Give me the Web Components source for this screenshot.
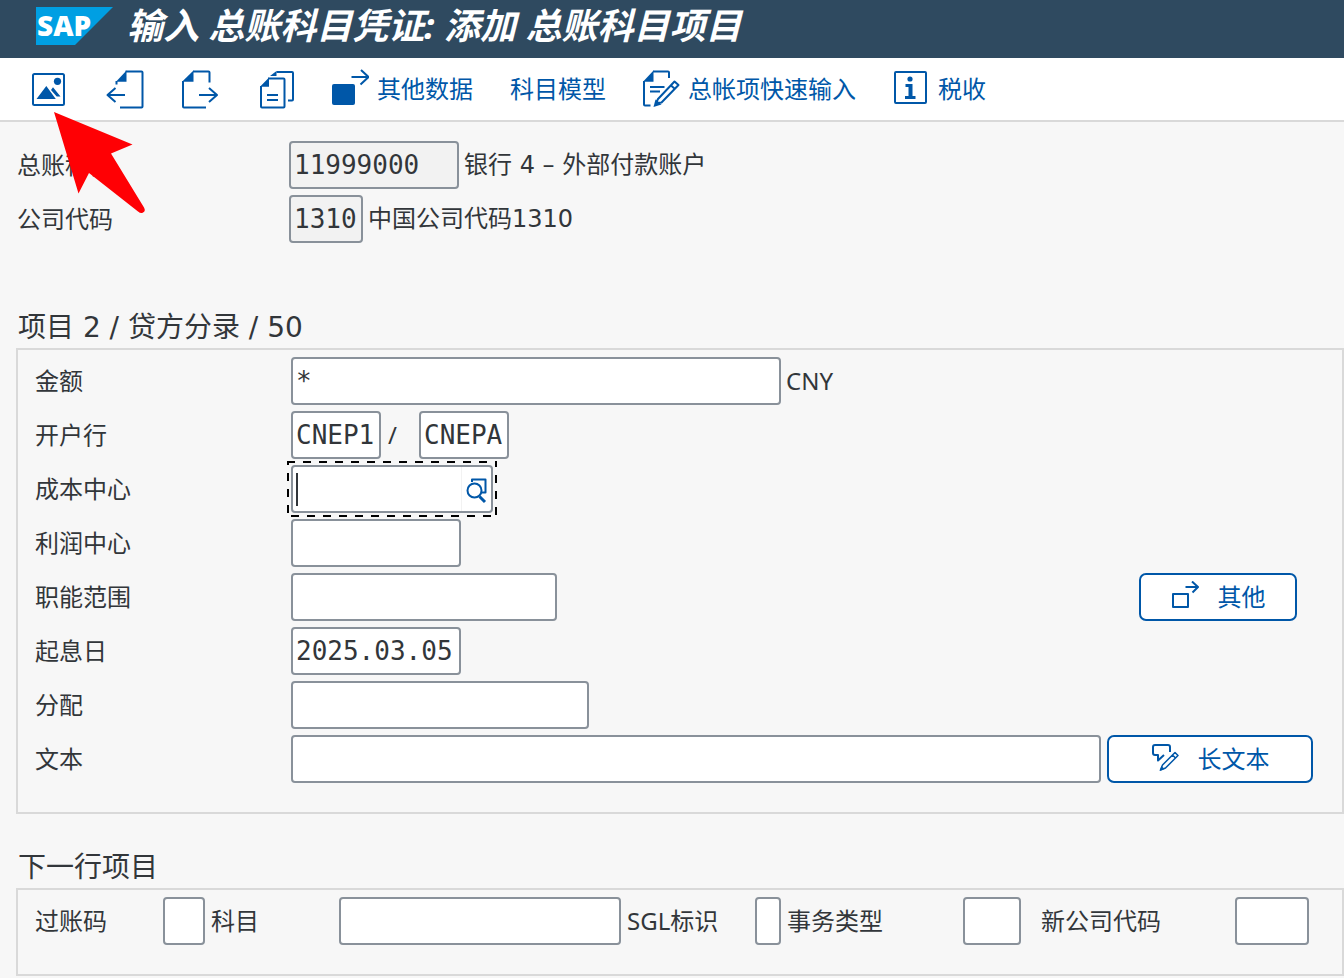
<!DOCTYPE html>
<html lang="zh-CN">
<head>
<meta charset="utf-8">
<meta name="viewport" content="width=device-width, initial-scale=1">
<title>输入 总账科目凭证: 添加 总账科目项目</title>
<style>
  html { background: #f7f7f7; }
  body {
    margin: 0;
    color: #32363a;
    font: 24px/32px "Noto Sans", "Noto Sans CJK SC", sans-serif;
    --accent: #0057a8;
    --line: #d9d9d9;
    --field-line: #89919a;
    --mono: "DejaVu Sans Mono", "Noto Sans CJK SC", monospace;
    --wide: "DejaVu Sans", "Noto Sans CJK SC", sans-serif;
  }
</style>
</head>
<body>
<posting-page></posting-page>

<script>
const ICONS = {
  picture: [38, 40, `<rect x="2" y="5" width="31" height="31" rx="1.5"/>
    <g class="f"><circle cx="26.5" cy="12.3" r="3.6"/><path d="M5.5 30 15.3 17l9.5 13zM20 21l2-2.700 7.500 9.200h-3.800zM21.500 18.500h2.500"/></g>`],
  back: [38, 40, `<path d="M19.500 2.500H35.500a1 1 0 0 1 1 1V37.500a1 1 0 0 1-1 1H14M10.500 12v3.500M1.500 26H19M9.500 19l-8 7 8 7"/>
    <path class="f" d="M10 12.800 20.500 1.500v11.300z"/>`],
  forward: [38, 40, `<path d="M12 2.500H27.500a1 1 0 0 1 1 1V13.500M2 12V37.500a1 1 0 0 0 1 1H25M18 26H35.500M28 19l8 7-8 7"/>
    <path class="f" d="M1 12.800 12.500 1.500v11.300z"/>`],
  copy: [38, 40, `<path d="M12 9.500H27.500a1 1 0 0 1 1 1V37.500a1 1 0 0 1-1 1H6a1 1 0 0 1-1-1V17M11 26H22M11 31H22M20.500 3H36a1 1 0 0 1 1 1V30.500a1 1 0 0 1-1 1H32"/>
    <path class="f" d="M4 17.800 13 8.500v9.300zM14 7 20.500 2v5z"/>`],
  other: [38, 40, `<path d="M20.500 8H37M30 1l7.500 7-8 7.500"/><rect class="f" x="1" y="15" width="23" height="21" rx="2"/>`],
  edit: [37, 40, `<path d="M10 2.500H25a1 1 0 0 1 1 1V9M1 12V35.500a1 1 0 0 0 1 1H7.500M7 18H21.500M7 22.500H17"/>
    <path class="f" d="M0 12.800 10.500 1.500v11.300z"/>
    <path d="M13 34 15 30 31.500 12.500 35.500 16 18.500 33.500zM28 16.500l4 3.500"/><path class="f" d="M10.500 38l2-7.500 6 5z"/>`],
  info: [37, 40, `<rect x="2" y="3" width="31" height="31" rx="1"/><circle class="f" cx="17" cy="10" r="2.600"/>
    <path class="f" d="M12.500 15H19.500V27H22.500V30H12V27H15.500V18H12.500z"/>`],
  more: [28, 28, `<rect x="2" y="13" width="15" height="13"/><path d="M14.500 6H27M21 .5 27 6l-5.500 5.500"/>`],
  note: [28, 28, `<path d="M13 12 7 17.500V12H4a2 2 0 0 1-2-2V4a2 2 0 0 1 2-2H17a2 2 0 0 1 2 2V9"/>
    <g style="stroke-width:1.500"><path d="M9.500 27 11.500 22 24 9.500 27 12.500 14.500 25zM21.500 12l3 3"/></g><path class="f" d="M8.500 28l2-5 3 3z"/>`],
  search: [22, 26, `<path d="M6 4V1.500H19.500V14.500H16"/><circle cx="8.500" cy="12.500" r="7"/><path d="M13.500 18.500l5.500 5.500" style="stroke-width:3"/>`]
};

function define(name, render) {
  customElements.define(name, class extends HTMLElement {
    connectedCallback() {
      if (this.shadowRoot) return;
      this.attachShadow({ mode: 'open' }).innerHTML = render(this);
    }
  });
}

define('ui-icon', el => {
  const [w, h, body] = ICONS[el.getAttribute('name')];
  return `<style>
    :host { display: block; flex: none; }
    svg { display: block; fill: none; stroke: currentColor; stroke-width: 2; stroke-linejoin: round; }
    .f { fill: currentColor; stroke: none; }
  </style><svg width="${w}" height="${h}" viewBox="0 0 ${w} ${h}" aria-hidden="true">${body}</svg>`;
});

define('title-bar', () => `<style>
    :host { display: flex; align-items: center; gap: 14px; height: 38px; padding: 7px 36px 13px; background: #2f4a60; color: #fff; }
    svg { display: block; flex: none; }
    text { font: 900 28px "Noto Sans", sans-serif; fill: #fff; }
    h1 { margin: 0; font: italic 700 36px/38px "Noto Sans", "Noto Sans CJK SC", sans-serif; white-space: nowrap; }
  </style>
  <svg width="77" height="38" viewBox="0 0 77 38" role="img" aria-label="SAP">
    <path d="M0 0H77L39 38H0z" fill="#009fe3"/><text x="1" y="29">SAP</text>
  </svg>
  <h1><slot></slot></h1>`);

define('tool-bar', () => `<style>
    :host { display: flex; flex-wrap: wrap; align-items: center; gap: 0 37px; min-height: 62px; padding: 0 31px; background: #fff; border-bottom: 2px solid var(--line); }
  </style><slot></slot>`);

define('tool-button', el => {
  const icon = el.getAttribute('icon');
  const label = el.getAttribute('label');
  return `<style>
    :host { display: block; }
    button { display: flex; align-items: center; gap: 8px; margin: 0; padding: 0; border: 0; background: none; color: var(--accent); font: inherit; white-space: nowrap; cursor: pointer; }
  </style><button type="button"${label ? ` aria-label="${label}"` : ''}>${icon ? `<ui-icon name="${icon}"></ui-icon>` : ''}<slot></slot></button>`;
});

define('action-button', el => `<style>
    :host { display: block; flex: none; }
    button { display: flex; align-items: center; justify-content: center; gap: 19px; width: 100%; height: 48px; margin: 0; padding: 0 32px; border: 2px solid var(--accent); border-radius: 7px; background: #fff; color: var(--accent); font: inherit; white-space: nowrap; cursor: pointer; }
    ui-icon { margin-bottom: 4px; }
  </style><button type="button"><ui-icon name="${el.getAttribute('icon')}"></ui-icon><slot></slot></button>`);

define('form-field', el => {
  const a = n => el.getAttribute(n);
  const has = n => el.hasAttribute(n);
  return `<style>
    :host { display: flex; align-items: center; }
    :host([grow]), :host([grow]) .box { flex: 1; min-width: 0; }
    label { flex: none; width: var(--label-width, 256px); white-space: nowrap; }
    .box { position: relative; flex: none; width: ${a('width') || 170}px; height: 48px; }
    input { box-sizing: border-box; display: block; width: 100%; height: 48px; margin: 0; padding: 0 3px; border: 2px solid var(--field-line); border-radius: 4px; background: #fff; color: inherit; font: 26px/32px var(--mono); outline: none; }
    input:read-only { background: #f2f2f2; }
    .ring { position: absolute; left: -4px; top: -4px; width: calc(100% + 8px); height: calc(100% + 8px); pointer-events: none; }
    .ring rect { fill: none; stroke: #000; stroke-width: 4; stroke-dasharray: 8 8; }
    .caret { position: absolute; left: 5px; top: 8px; width: 2px; height: 33px; background: #32363a; }
    .help { position: absolute; right: 2px; top: 2px; width: 30px; height: 44px; display: flex; align-items: center; justify-content: center; margin: 0; padding: 4px 0 0; border: 0; border-left: 1px solid #f2f2f2; background: none; color: var(--accent); }
    .after { display: flex; align-items: center; white-space: nowrap; padding-left: 5px; font-family: var(--after-font, inherit); }
  </style>
  ${a('label') ? `<label for="in">${a('label')}</label>` : ''}
  <div class="box">
    <input id="in" type="text" value="${a('value') || ''}"${has('readonly') ? ' readonly' : ''}${a('name') ? ` aria-label="${a('name')}"` : ''}>
    ${has('active') ? `<svg class="ring" aria-hidden="true"><rect width="100%" height="100%"/></svg><span class="caret"></span><button class="help" type="button" aria-label="搜索帮助"><ui-icon name="search"></ui-icon></button>` : ''}
  </div>
  ${el.childNodes.length ? '<span class="after"><slot></slot></span>' : ''}`;
});

define('form-row', () => `<style>
    :host { display: flex; align-items: center; gap: 6px; }
  </style><slot></slot>`);

define('form-group', el => `<style>
    :host { display: block; }
    h2 { margin: 0 0 0 18px; padding-top: 4px; font: 400 28px/40px var(--wide); }
    section { display: flex; flex-direction: column; gap: 6px; margin-left: 16px; padding: 7px 29px 29px 17px; border: 2px solid var(--line); }
  </style><h2 id="t">${el.getAttribute('heading')}</h2><section aria-labelledby="t"><slot></slot></section>`);

define('pointer-arrow', () => `<style>
    :host { position: absolute; left: 54px; top: 112px; pointer-events: none; }
    svg { display: block; }
  </style><svg width="92" height="102" viewBox="0 0 92 102" aria-hidden="true">
    <path d="M0 0 78.500 32.500 57 41.500 90 95.500Q92 99 89 100.500Q87 102 84 99.500L35 61 24.500 81.500z" fill="#ff0004"/></svg>`);

define('posting-page', () => `<style>
    :host { display: block; position: relative; }
    .head { display: flex; flex-direction: column; gap: 6px; padding: 19px 17px 61px; --label-width: 272px; --after-font: var(--wide); }
    form-group + form-group { margin-top: 30px; }
    .end { margin-left: auto; margin-right: 16px; width: 158px; }
    .long { width: 206px; }
    .slash { width: 31px; padding-left: 2px; }
    .next { flex-wrap: wrap; --label-width: 128px; }
    .type { --label-width: 176px; }
    .company { --label-width: 194px; margin-left: 14px; }
  </style>
  <title-bar>输入 总账科目凭证: 添加 总账科目项目</title-bar>
  <tool-bar role="toolbar">
    <tool-button icon="picture" label="凭证抬头"></tool-button>
    <tool-button icon="back" label="上一项"></tool-button>
    <tool-button icon="forward" label="下一项"></tool-button>
    <tool-button icon="copy" label="复制"></tool-button>
    <tool-button icon="other">其他数据</tool-button>
    <tool-button>科目模型</tool-button>
    <tool-button icon="edit">总帐项快速输入</tool-button>
    <tool-button icon="info">税收</tool-button>
  </tool-bar>
  <div class="head">
    <form-field label="总账科目" value="11999000" width="170" readonly>银行 4 – 外部付款账户</form-field>
    <form-field label="公司代码" value="1310" width="74" readonly>中国公司代码1310</form-field>
  </div>
  <form-group heading="项目 2 / 贷方分录 / 50">
    <form-field label="金额" value="*" width="490">CNY</form-field>
    <form-field label="开户行" value="CNEP1" width="90"><span class="slash">/</span><form-field name="账户标识" value="CNEPA" width="90"></form-field></form-field>
    <form-field label="成本中心" width="202" active></form-field>
    <form-field label="利润中心" width="170"></form-field>
    <form-row>
      <form-field label="职能范围" width="266"></form-field>
      <action-button class="end" icon="more">其他</action-button>
    </form-row>
    <form-field label="起息日" value="2025.03.05" width="170"></form-field>
    <form-field label="分配" width="298"></form-field>
    <form-row>
      <form-field label="文本" grow></form-field>
      <action-button class="long" icon="note">长文本</action-button>
    </form-row>
  </form-group>
  <form-group heading="下一行项目">
    <form-row class="next">
      <form-field label="过账码" width="42"></form-field>
      <form-field label="科目" width="282"></form-field>
      <form-field label="SGL标识" width="26"></form-field>
      <form-field class="type" label="事务类型" width="58"></form-field>
      <form-field class="company" label="新公司代码" width="74"></form-field>
    </form-row>
  </form-group>
  <pointer-arrow></pointer-arrow>`);
</script>
</body>
</html>
